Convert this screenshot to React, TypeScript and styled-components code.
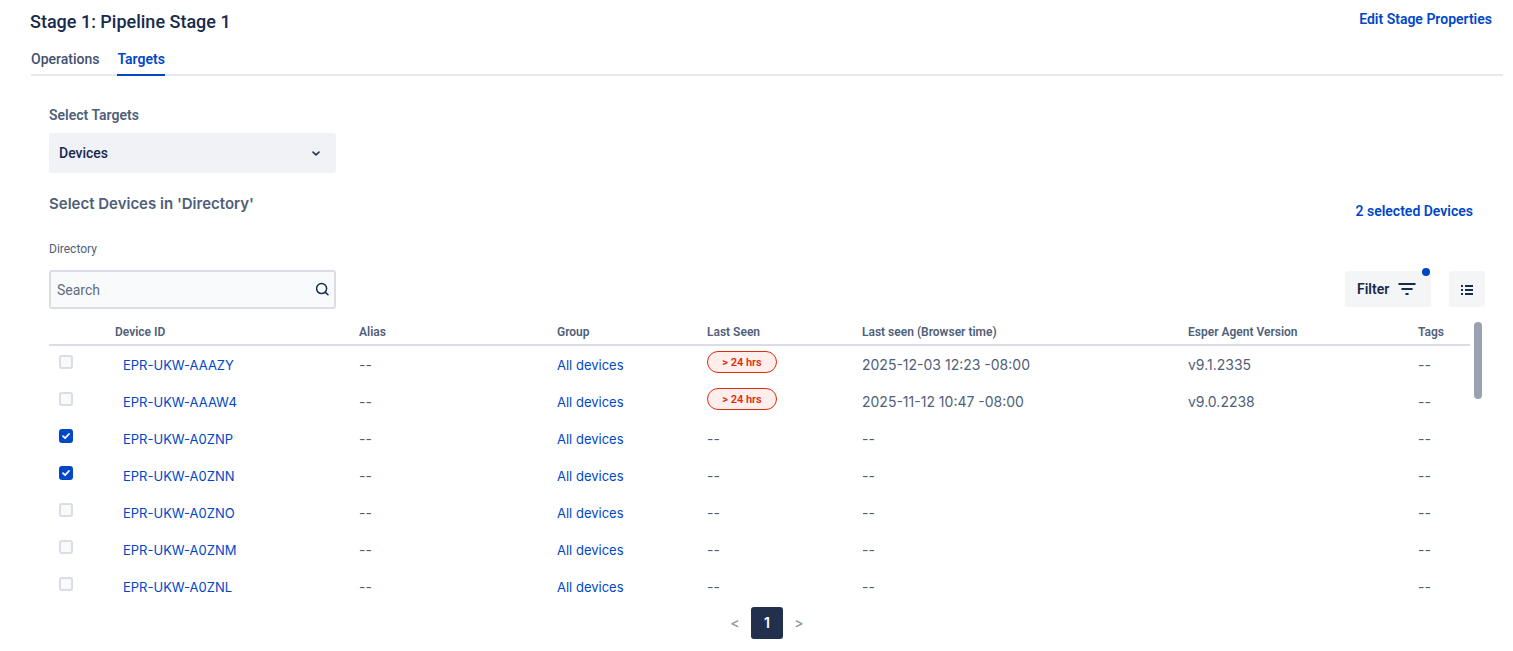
import React, { useState } from 'react';
import styled, { createGlobalStyle, css } from 'styled-components';

const color = {
  ink: '#172b4d',
  navy: '#22304e',
  text: '#505f79',
  blue: '#0047c7',
  line: '#dadde3',
  red: '#dc2d0c',
};

const dataFont = 'Inter, "Liberation Sans", sans-serif';

const GlobalStyle = createGlobalStyle`
  *, *::before, *::after { box-sizing: border-box; }
  body {
    margin: 0;
    background: #fff;
    color: ${color.text};
    font: 400 14px/20px Roboto, "Liberation Sans", sans-serif;
  }
  button, input, select { font: inherit; color: inherit; }
  a { color: ${color.blue}; text-decoration: none; }
`;

const StageHeader = styled.header`
  display: flex;
  justify-content: space-between;
  align-items: flex-start;
  padding: 9px 21px 7px 30px;
`;

const StageTitle = styled.h1`
  margin: 0;
  font-size: 18px;
  line-height: 26px;
  font-weight: 500;
  color: ${color.ink};
`;

const TextButton = styled.button`
  border: 0;
  padding: 0;
  background: none;
  color: ${color.blue};
  font-weight: 600;
  cursor: pointer;
`;

const Tabs = styled.nav`
  display: flex;
  gap: 18px;
  margin: 0 10px 0 31px;
  box-shadow: inset 0 -2px 0 #e8e9ee;
`;

const Tab = styled.button<{ $active?: boolean }>`
  border: 0;
  border-bottom: 2px solid ${(p) => (p.$active ? color.blue : 'transparent')};
  padding: 7px 0 5px;
  background: none;
  color: ${(p) => (p.$active ? color.blue : '#42526e')};
  font-weight: ${(p) => (p.$active ? 600 : 500)};
  cursor: pointer;
`;

const Panel = styled.main`
  padding: 29px 28px 12px 49px;
`;

const FieldLabel = styled.label`
  display: block;
  margin-bottom: 8px;
  font-weight: 600;
`;

const FieldBox = styled.div`
  position: relative;
  width: 287px;
`;

const Select = styled.select`
  display: block;
  appearance: none;
  width: 100%;
  height: 40px;
  border: 0;
  border-radius: 3px;
  padding: 0 32px 0 10px;
  background: #f1f2f6;
  color: ${color.ink};
  font-weight: 500;
`;

const FieldIcon = styled.svg<{ $right: number }>`
  position: absolute;
  top: 0;
  bottom: 0;
  right: ${(p) => p.$right}px;
  margin: auto 0;
  pointer-events: none;
`;

const SectionHead = styled.div`
  display: flex;
  justify-content: space-between;
  align-items: flex-start;
  padding: 19px 12px 20px 0;

  ${TextButton} { margin-top: 9px; }
`;

const SectionTitle = styled.h2`
  margin: 0;
  font-family: ${dataFont};
  font-size: 15px;
  line-height: 24px;
  font-weight: 600;
`;

const Breadcrumb = styled.div`
  font-size: 12px;
  line-height: 16px;
`;

const Toolbar = styled.div`
  display: flex;
  justify-content: space-between;
  align-items: flex-start;
  margin: 13px 0 9px;
`;

const SearchInput = styled.input`
  display: block;
  width: 100%;
  height: 39px;
  border: 2px solid ${color.line};
  border-radius: 3px;
  padding: 0 32px 0 6px;
  background: #f9fafc;
  &::placeholder { color: #5e6c84; opacity: 1; }
`;

const Actions = styled.div`
  display: flex;
  gap: 18px;
  padding: 1px 0;
`;

const ToolButton = styled.button`
  position: relative;
  display: flex;
  align-items: center;
  height: 36px;
  border: 0;
  border-radius: 3px;
  padding: 0 12px;
  background: #f4f5f7;
  color: ${color.ink};
  font-weight: 600;
  cursor: pointer;
`;

const FilterButton = styled(ToolButton)`
  width: 86px;
  padding: 0 15px 0 12px;
  justify-content: space-between;
`;

const ActiveDot = styled.span`
  position: absolute;
  top: -3px;
  right: 1px;
  width: 8px;
  height: 8px;
  border-radius: 50%;
  background: ${color.blue};
`;

const TableView = styled.div`
  display: flex;
  align-items: flex-start;
  gap: 4px;
  padding-right: 3px;
`;

const ScrollThumb = styled.div`
  flex: none;
  width: 8px;
  height: 77px;
  margin-top: 4px;
  border-radius: 4px;
  background: #9aa1b0;
`;

const Table = styled.table`
  flex: 1;
  width: 100%;
  table-layout: fixed;
  border-collapse: separate;
  border-spacing: 0;
  white-space: nowrap;
`;

const Col = styled.col<{ $width: number }>`
  width: ${(p) => p.$width}px;
`;

const HeadCell = styled.th`
  height: 28px;
  padding: 4px 0 2px;
  border-bottom: 2px solid ${color.line};
  text-align: left;
  vertical-align: top;
  font-size: 12px;
  font-weight: 600;
`;

const Cell = styled.td<{ $kind?: 'check' | 'id' | 'status' }>`
  height: 37px;
  padding: 9px 0 0;
  vertical-align: top;
  font-family: ${dataFont};
  ${(p) => p.$kind === 'check' && css`padding-left: 10px;`}
  ${(p) => p.$kind === 'id' && css`padding-left: 8px;`}
  ${(p) => p.$kind === 'status' && css`padding-top: 5px;`}
`;

const CellLink = styled.a`
  display: block;
  font-size: 13px;
`;

const CheckWrap = styled.label`
  position: relative;
  display: block;
  width: 14px;
  height: 14px;
`;

const CheckInput = styled.input`
  display: block;
  appearance: none;
  width: 14px;
  height: 14px;
  margin: 0;
  border: 2px solid ${color.line};
  border-radius: 3px;
  background: #f9fafc;
  &:checked { border-color: ${color.blue}; background: ${color.blue}; }
`;

const CheckMark = styled.svg`
  position: absolute;
  inset: 0;
  pointer-events: none;
`;

const Badge = styled.span`
  display: flex;
  align-items: center;
  justify-content: center;
  width: 70px;
  height: 22px;
  border: 1px solid ${color.red};
  border-radius: 11px;
  background: #ffeeec;
  color: ${color.red};
  font-family: Roboto, "Liberation Sans", sans-serif;
  font-size: 11px;
  line-height: 21px;
  font-weight: 600;
`;

const Pagination = styled.nav`
  display: flex;
  justify-content: center;
  margin-top: 2px;
`;

const PageButton = styled.button<{ $current?: boolean }>`
  width: 32px;
  height: 32px;
  border: 0;
  border-radius: 3px;
  padding: 0;
  background: ${(p) => (p.$current ? color.navy : 'transparent')};
  color: ${(p) => (p.$current ? '#fff' : '#8993a4')};
  font-family: ${dataFont};
  font-weight: ${(p) => (p.$current ? 600 : 500)};
`;

const columns = [
  { title: '', width: 66 },
  { title: 'Device ID', width: 244 },
  { title: 'Alias', width: 198 },
  { title: 'Group', width: 150 },
  { title: 'Last Seen', width: 155 },
  { title: 'Last seen (Browser time)', width: 326 },
  { title: 'Esper Agent Version', width: 230 },
  { title: 'Tags', width: 52 },
];

type Device = { id: string; seen?: string; time?: string; version?: string };

const devices: Device[] = [
  { id: 'EPR-UKW-AAAZY', seen: '> 24 hrs', time: '2025-12-03 12:23 -08:00', version: 'v9.1.2335' },
  { id: 'EPR-UKW-AAAW4', seen: '> 24 hrs', time: '2025-11-12 10:47 -08:00', version: 'v9.0.2238' },
  { id: 'EPR-UKW-A0ZNP' },
  { id: 'EPR-UKW-A0ZNN' },
  { id: 'EPR-UKW-A0ZNO' },
  { id: 'EPR-UKW-A0ZNM' },
  { id: 'EPR-UKW-A0ZNL' },
];

function Checkbox({ label, checked, onChange }: { label: string; checked: boolean; onChange: () => void }) {
  return (
    <CheckWrap>
      <CheckInput type="checkbox" aria-label={label} checked={checked} onChange={onChange} />
      {checked && (
        <CheckMark width="14" height="14" viewBox="0 0 14 14" fill="none" stroke="#fff" strokeWidth="1.8" strokeLinecap="round" strokeLinejoin="round">
          <path d="M4 7.2 6.1 9.2 10 5" />
        </CheckMark>
      )}
    </CheckWrap>
  );
}

function DeviceRow({ device, checked, onToggle }: { device: Device; checked: boolean; onToggle: () => void }) {
  return (
    <tr>
      <Cell $kind="check"><Checkbox label={device.id} checked={checked} onChange={onToggle} /></Cell>
      <Cell $kind="id"><CellLink href="#device">{device.id}</CellLink></Cell>
      <Cell>--</Cell>
      <Cell><CellLink href="#group">All devices</CellLink></Cell>
      {device.seen ? <Cell $kind="status"><Badge>{device.seen}</Badge></Cell> : <Cell>--</Cell>}
      <Cell>{device.time ?? '--'}</Cell>
      <Cell>{device.version}</Cell>
      <Cell>--</Cell>
    </tr>
  );
}

export default function App() {
  const [selected, setSelected] = useState<string[]>(['EPR-UKW-A0ZNP', 'EPR-UKW-A0ZNN']);
  const toggle = (id: string) =>
    setSelected((ids) => (ids.includes(id) ? ids.filter((other) => other !== id) : [...ids, id]));

  return (
    <>
      <GlobalStyle />
      <StageHeader>
        <StageTitle>Stage 1: Pipeline Stage 1</StageTitle>
        <TextButton>Edit Stage Properties</TextButton>
      </StageHeader>
      <Tabs>
        <Tab>Operations</Tab>
        <Tab $active>Targets</Tab>
      </Tabs>
      <Panel>
        <FieldLabel htmlFor="targets">Select Targets</FieldLabel>
        <FieldBox>
          <Select id="targets" defaultValue="Devices">
            <option>Devices</option>
          </Select>
          <FieldIcon $right={15} width="10" height="10" viewBox="0 0 10 10" fill="none" stroke="#2c3a58" strokeWidth="1.7" strokeLinecap="round" strokeLinejoin="round">
            <path d="M2 4.1 5 6.9 8 4.1" />
          </FieldIcon>
        </FieldBox>

        <SectionHead>
          <SectionTitle>Select Devices in 'Directory'</SectionTitle>
          <TextButton>{selected.length} selected Devices</TextButton>
        </SectionHead>
        <Breadcrumb>Directory</Breadcrumb>

        <Toolbar>
          <FieldBox>
            <SearchInput type="search" placeholder="Search" aria-label="Search" />
            <FieldIcon $right={6} width="15" height="15" viewBox="0 0 15 15" fill="none" stroke={color.ink} strokeWidth="1.5" strokeLinecap="round">
              <circle cx="6.6" cy="6.6" r="5" />
              <path d="M10.4 10.4 13 12.8" />
            </FieldIcon>
          </FieldBox>
          <Actions>
            <FilterButton>
              Filter
              <svg width="18" height="12" viewBox="0 0 18 12" fill="none" stroke={color.ink} strokeWidth="2" strokeLinecap="round">
                <path d="M1.2 1H16.8M4.2 6H13.8M8.2 11H9.8" />
              </svg>
              <ActiveDot />
            </FilterButton>
            <ToolButton aria-label="Columns">
              <svg width="12" height="12" viewBox="0 0 12 12" fill={color.ink}>
                <path d="M0 2H2V4H0ZM4 2H12V4H4ZM0 6H2V8H0ZM4 6H12V8H4ZM0 10H2V12H0ZM4 10H12V12H4Z" />
              </svg>
            </ToolButton>
          </Actions>
        </Toolbar>

        <TableView>
          <Table>
            <colgroup>
              {columns.map((c) => <Col key={c.title} $width={c.width} />)}
            </colgroup>
            <thead>
              <tr>
                {columns.map((c) => <HeadCell key={c.title} scope="col">{c.title}</HeadCell>)}
              </tr>
            </thead>
            <tbody>
              {devices.map((d) => (
                <DeviceRow key={d.id} device={d} checked={selected.includes(d.id)} onToggle={() => toggle(d.id)} />
              ))}
            </tbody>
          </Table>
          <ScrollThumb />
        </TableView>

        <Pagination aria-label="Pages">
          <PageButton aria-label="Previous page">&lt;</PageButton>
          <PageButton $current>1</PageButton>
          <PageButton aria-label="Next page">&gt;</PageButton>
        </Pagination>
      </Panel>
    </>
  );
}
